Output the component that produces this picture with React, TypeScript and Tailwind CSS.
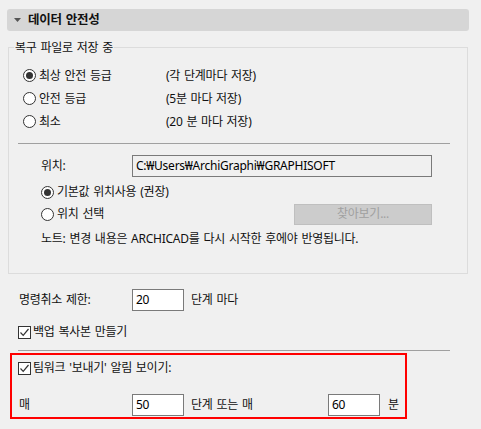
const font = { fontFamily: '"Segoe UI", "Noto Sans", "Noto Sans CJK KR", sans-serif', wordSpacing: "1px" };

const Radio = ({ checked }: { checked?: boolean }) => (
  <span className="w-[13px] h-[13px] rounded-full border border-[#333333] bg-white flex items-center justify-center shrink-0">
    {checked && <span className="w-[7px] h-[7px] rounded-full bg-[#333333]" />}
  </span>
);

const Check = () => (
  <span className="w-[13px] h-[13px] border border-[#333333] bg-white flex items-center justify-center shrink-0">
    <svg width="11" height="11" viewBox="0 0 11 11">
      <path d="M1.5 5.5 L4.2 8.3 L9.5 2" fill="none" stroke="#333333" strokeWidth="1.2" />
    </svg>
  </span>
);

const Field = ({ value, w, white = true }: { value: string; w: string; white?: boolean }) => (
  <div
    className={`${w} h-[22px] border border-[#7a7a7a] ${white ? "bg-white" : "bg-[#f0f0f0]"} flex items-center px-[3px] text-[12px] text-[#000000]`}
  >
    {value}
  </div>
);

export default function App() {
  return (
    <div
      className="w-[481px] h-[429px] bg-[#f0f0f0] overflow-hidden pt-[9px] text-[12px] text-[#111111] tracking-[-0.25px]"
      style={font}
    >
      {/* Section header */}
      <div className="ml-[7px] w-[462px] h-[22px] rounded-[3px] bg-[#d6d6d6] flex items-center">
        <svg width="7" height="4" viewBox="0 0 7 4" className="ml-[7px]">
          <path d="M0 0 H7 L3.5 4 Z" fill="#555555" />
        </svg>
        <span className="ml-[7px] font-bold text-[12.5px]">데이터 안전성</span>
      </div>

      {/* Recovery group */}
      <div className="relative ml-[8px] mt-[16px] w-[460px] h-[227px] border border-[#dcdcdc] pt-[16px]">
        <span className="absolute -top-[9px] left-[5px] px-[1px] bg-[#f0f0f0] leading-[18px]">
          복구 파일로 저장 중
        </span>

        {[
          ["최상 안전 등급", "(각 단계마다 저장)", true],
          ["안전 등급", "(5분 마다 저장)", false],
          ["최소", "(20 분 마다 저장)", false],
        ].map(([a, b, c]) => (
          <div key={a as string} className="h-[23px] flex items-center pl-[14px]">
            <Radio checked={c as boolean} />
            <span className="ml-[3px] w-[127px]">{a}</span>
            <span>{b}</span>
          </div>
        ))}

        <div className="ml-[9px] mt-[10px] w-[432px] h-px bg-[#a0a0a0]" />

        <div className="mt-[11px] flex items-center pl-[32px]">
          <span className="w-[91px]">위치:</span>
          <Field value="C:₩Users₩ArchiGraphi₩GRAPHISOFT" w="w-[300px]" white={false} />
        </div>

        <div className="mt-[4px] h-[22px] flex items-center pl-[32px]">
          <Radio checked />
          <span className="ml-[3px]">기본값 위치사용 (권장)</span>
        </div>

        <div className="h-[22px] flex items-center pl-[32px]">
          <Radio />
          <span className="ml-[3px] w-[237px]">위치 선택</span>
          <div className="w-[138px] h-[21px] bg-[#cccccc] border border-[#bfbfbf] flex items-center justify-center text-[#a0a0a0]">
            찾아보기...
          </div>
        </div>

        <div className="mt-[3px] h-[22px] flex items-center pl-[32px]">
          노트: 변경 내용은 ARCHICAD를 다시 시작한 후에야 반영됩니다.
        </div>
      </div>

      {/* Undo */}
      <div className="mt-[15px] flex items-center pl-[19px]">
        <span className="w-[113px]">명령취소 제한:</span>
        <Field value="20" w="w-[52px]" />
        <span className="ml-[7px]">단계 마다</span>
      </div>

      <div className="mt-[14px] h-[14px] flex items-center pl-[18px]">
        <Check />
        <span className="ml-[2px]">백업 복사본 만들기</span>
      </div>

      <div className="ml-[18px] mt-[11px] w-[432px] h-px bg-[#a0a0a0]" />

      {/* Teamwork (highlighted) */}
      <div className="ml-[10px] mt-[2px] w-[397px] h-[66px] border-2 border-[#ff0000]">
        <div className="mt-[6px] h-[14px] flex items-center pl-[6px]">
          <Check />
          <span className="ml-[2px]">팀워크 '보내기' 알림 보이기:</span>
        </div>
        <div className="mt-[19px] flex items-center pl-[7px]">
          <span className="w-[113px]">매</span>
          <Field value="50" w="w-[52px]" />
          <span className="ml-[7px] w-[137px]">단계 또는 매</span>
          <Field value="60" w="w-[52px]" />
          <span className="ml-[8px]">분</span>
        </div>
      </div>
    </div>
  );
}
